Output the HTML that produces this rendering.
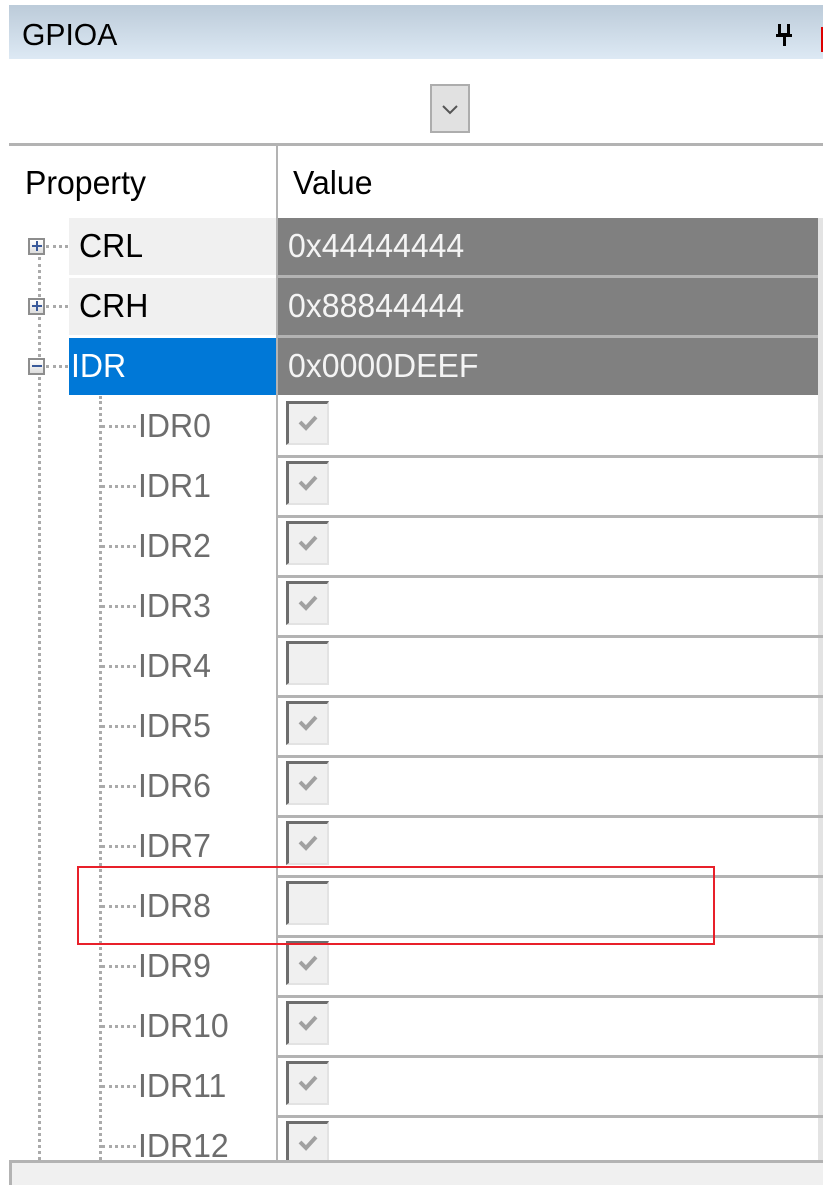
<!DOCTYPE html>
<html><head><style>
body{margin:0;width:823px;height:1185px;background:#fff;position:relative;overflow:hidden;font-family:"Liberation Sans",sans-serif}
.a{position:absolute}
.t{position:absolute;font-size:33px;transform-origin:0 50%;transform:scaleX(0.97);white-space:nowrap;line-height:40px}
.cb{position:absolute;left:286px;width:43px;height:44px;background:#f0f0f0;border-top:3px solid #6d6d6d;border-left:3px solid #6d6d6d;border-right:2px solid #e3e3e3;border-bottom:2px solid #e3e3e3;box-sizing:border-box}
.cb svg{position:absolute;left:8px;top:8px}
.dh{position:absolute;height:0;border-top:3px dotted #aaa}
.dv{position:absolute;width:0;border-left:3px dotted #aaa}
.ln{position:absolute;left:278px;width:545px;height:3px;background:#b3b3b3}
.exp{position:absolute;left:28px;width:17px;height:17px;border:2px solid #8d8d8d;background:linear-gradient(#fff,#ddd);box-sizing:border-box}
.c{color:#6d6d6d}
</style></head><body>
<div class="a" style="left:9px;top:5px;width:814px;height:54px;background:linear-gradient(#bccbd9,#dde9f4)"></div>
<div class="t" style="left:22px;top:15px;font-size:31px">GPIOA</div>
<div class="a" style="left:778px;top:24px;width:12px;height:12px;border:3px solid #000;border-top:none;box-sizing:border-box"></div>
<div class="a" style="left:776px;top:34px;width:16px;height:3px;background:#000"></div>
<div class="a" style="left:783px;top:36px;width:3px;height:10px;background:#000"></div>
<div class="a" style="left:821px;top:27px;width:2px;height:25px;background:#d00"></div>
<div class="a" style="left:430px;top:84px;width:40px;height:49px;border:2px solid #adadad;background:#e1e1e1;box-sizing:border-box"></div>
<svg class="a" style="left:440px;top:102px" width="20" height="14"><path d="M3 4 L10 11 L17 4" stroke="#555" stroke-width="2" fill="none"/></svg>
<div class="a" style="left:9px;top:143px;width:814px;height:3px;background:#b3b3b3"></div>
<div class="a" style="left:276px;top:146px;width:2px;height:1014px;background:#b3b3b3"></div>
<div class="t" style="left:25px;top:163px">Property</div>
<div class="t" style="left:293px;top:163px">Value</div>
<div class="a" style="left:69px;top:218px;width:207px;height:57px;background:#f0f0f0"></div>
<div class="a" style="left:69px;top:278px;width:207px;height:57px;background:#f0f0f0"></div>
<div class="a" style="left:69px;top:338px;width:207px;height:57px;background:#0078d7"></div>
<div class="a" style="left:278px;top:218px;width:540px;height:177px;background:#808080"></div>
<div class="ln" style="top:275px"></div><div class="ln" style="top:335px"></div>
<div class="a" style="left:818px;top:218px;width:5px;height:942px;background:#e3e3e3"></div>
<div class="t" style="left:79px;top:226px;color:#000">CRL</div>
<div class="t" style="left:79px;top:286px;color:#000">CRH</div>
<div class="t" style="left:71px;top:346px;color:#fff">IDR</div>
<div class="t" style="left:288px;top:226px;color:#f4f4f4">0x44444444</div>
<div class="t" style="left:288px;top:286px;color:#f4f4f4">0x88844444</div>
<div class="t" style="left:288px;top:346px;color:#f4f4f4">0x0000DEEF</div>
<div class="exp" style="top:238px"></div><div class="a" style="left:32px;top:245px;width:10px;height:2px;background:#3a5a9a"></div><div class="a" style="left:36px;top:241px;width:2px;height:10px;background:#3a5a9a"></div>
<div class="exp" style="top:298px"></div><div class="a" style="left:32px;top:305px;width:10px;height:2px;background:#3a5a9a"></div><div class="a" style="left:36px;top:301px;width:2px;height:10px;background:#3a5a9a"></div>
<div class="exp" style="top:358px"></div><div class="a" style="left:32px;top:365px;width:10px;height:2px;background:#3a5a9a"></div>
<div class="dh" style="left:46px;top:245px;width:22px"></div>
<div class="dh" style="left:46px;top:305px;width:22px"></div>
<div class="dh" style="left:46px;top:365px;width:22px"></div>
<div class="dv" style="left:38px;top:257px;height:40px"></div>
<div class="dv" style="left:38px;top:317px;height:40px"></div>
<div class="dv" style="left:38px;top:377px;height:783px"></div>
<div class="dv" style="left:99px;top:396px;height:764px"></div>

<div class="ln" style="top:455px"></div><div class="dh" style="left:102px;top:425px;width:34px"></div><div class="t c" style="left:138px;top:406px">IDR0</div><div class="cb" style="top:401px"><svg width="22" height="22"><path d="M3 10 L9 16 L19 5" stroke="#a0a0a0" stroke-width="4" fill="none"/></svg></div>
<div class="ln" style="top:515px"></div><div class="dh" style="left:102px;top:485px;width:34px"></div><div class="t c" style="left:138px;top:466px">IDR1</div><div class="cb" style="top:461px"><svg width="22" height="22"><path d="M3 10 L9 16 L19 5" stroke="#a0a0a0" stroke-width="4" fill="none"/></svg></div>
<div class="ln" style="top:575px"></div><div class="dh" style="left:102px;top:545px;width:34px"></div><div class="t c" style="left:138px;top:526px">IDR2</div><div class="cb" style="top:521px"><svg width="22" height="22"><path d="M3 10 L9 16 L19 5" stroke="#a0a0a0" stroke-width="4" fill="none"/></svg></div>
<div class="ln" style="top:635px"></div><div class="dh" style="left:102px;top:605px;width:34px"></div><div class="t c" style="left:138px;top:586px">IDR3</div><div class="cb" style="top:581px"><svg width="22" height="22"><path d="M3 10 L9 16 L19 5" stroke="#a0a0a0" stroke-width="4" fill="none"/></svg></div>
<div class="ln" style="top:695px"></div><div class="dh" style="left:102px;top:665px;width:34px"></div><div class="t c" style="left:138px;top:646px">IDR4</div><div class="cb" style="top:641px"></div>
<div class="ln" style="top:755px"></div><div class="dh" style="left:102px;top:725px;width:34px"></div><div class="t c" style="left:138px;top:706px">IDR5</div><div class="cb" style="top:701px"><svg width="22" height="22"><path d="M3 10 L9 16 L19 5" stroke="#a0a0a0" stroke-width="4" fill="none"/></svg></div>
<div class="ln" style="top:815px"></div><div class="dh" style="left:102px;top:785px;width:34px"></div><div class="t c" style="left:138px;top:766px">IDR6</div><div class="cb" style="top:761px"><svg width="22" height="22"><path d="M3 10 L9 16 L19 5" stroke="#a0a0a0" stroke-width="4" fill="none"/></svg></div>
<div class="ln" style="top:875px"></div><div class="dh" style="left:102px;top:845px;width:34px"></div><div class="t c" style="left:138px;top:826px">IDR7</div><div class="cb" style="top:821px"><svg width="22" height="22"><path d="M3 10 L9 16 L19 5" stroke="#a0a0a0" stroke-width="4" fill="none"/></svg></div>
<div class="ln" style="top:935px"></div><div class="dh" style="left:102px;top:905px;width:34px"></div><div class="t c" style="left:138px;top:886px">IDR8</div><div class="cb" style="top:881px"></div>
<div class="ln" style="top:995px"></div><div class="dh" style="left:102px;top:965px;width:34px"></div><div class="t c" style="left:138px;top:946px">IDR9</div><div class="cb" style="top:941px"><svg width="22" height="22"><path d="M3 10 L9 16 L19 5" stroke="#a0a0a0" stroke-width="4" fill="none"/></svg></div>
<div class="ln" style="top:1055px"></div><div class="dh" style="left:102px;top:1025px;width:34px"></div><div class="t c" style="left:138px;top:1006px">IDR10</div><div class="cb" style="top:1001px"><svg width="22" height="22"><path d="M3 10 L9 16 L19 5" stroke="#a0a0a0" stroke-width="4" fill="none"/></svg></div>
<div class="ln" style="top:1115px"></div><div class="dh" style="left:102px;top:1085px;width:34px"></div><div class="t c" style="left:138px;top:1066px">IDR11</div><div class="cb" style="top:1061px"><svg width="22" height="22"><path d="M3 10 L9 16 L19 5" stroke="#a0a0a0" stroke-width="4" fill="none"/></svg></div>
<div class="dh" style="left:102px;top:1145px;width:34px"></div><div class="t c" style="left:138px;top:1126px">IDR12</div><div class="cb" style="top:1121px"><svg width="22" height="22"><path d="M3 10 L9 16 L19 5" stroke="#a0a0a0" stroke-width="4" fill="none"/></svg></div>

<div class="a" style="left:9px;top:1160px;width:814px;height:25px;background:#f0f0f0;border-top:3px solid #b3b3b3;border-left:3px solid #b3b3b3;box-sizing:border-box"></div>
<div class="a" style="left:77px;top:866px;width:638px;height:79px;border:2px solid #e8202a;box-sizing:border-box"></div>
</body></html>
